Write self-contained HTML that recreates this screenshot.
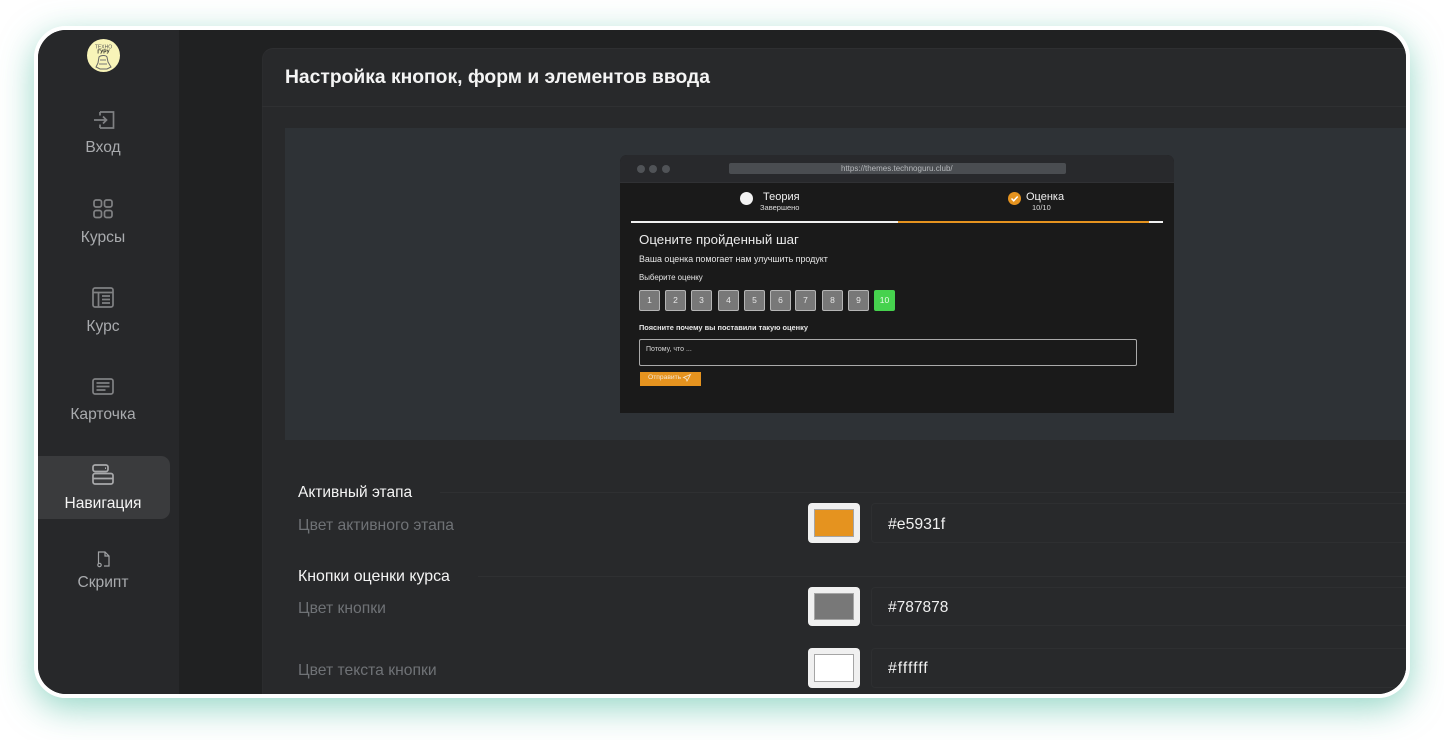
<!DOCTYPE html>
<html lang="ru"><head><meta charset="utf-8"><title>Настройка кнопок</title>
<style>
*{box-sizing:border-box;margin:0;padding:0}
html,body{width:1444px;height:740px;background:#fff;overflow:hidden;font-family:"Liberation Sans","DejaVu Sans",sans-serif}
.a{position:absolute}
.t{position:absolute;white-space:nowrap;line-height:1}
#frame{position:absolute;left:34px;top:26px;width:1376px;height:672px;border:4px solid #fff;border-radius:32px;box-shadow:0 10px 34px rgba(85,190,165,.62)}
#in{position:absolute;left:0;top:0;width:1368px;height:664px;border-radius:28px;overflow:hidden;background:#202122}
#in>*{margin-left:-38px;margin-top:-30px}
.nav{color:#a9abae;font-size:15.6px;text-align:center;width:130px;left:38px}
svg{position:absolute;overflow:visible;fill:none}
.lbl{color:#6f7276;font-size:15.7px}
.h{color:#f4f4f4;font-size:15.800px}
.sw{position:absolute;left:808px;width:52px;background:#f0f0f0;border-radius:4px}
.sw i{position:absolute;left:6px;top:6px;right:6px;bottom:6px;border:1px solid #a5a5a5;display:block}
.inp{position:absolute;left:871px;width:560px;border:1px solid #2e2f31;border-radius:4px;background:#28292b}
.hex{color:#f0f0f0;font-size:15.800px;left:888px}
.ln{position:absolute;height:1px;background:#2f3032}
.n{position:absolute;top:290px;width:21px;height:21px;background:#787878;border:1px solid #b5b5b5;border-radius:2px;color:#e8e8e8;font-size:8.500px;text-align:center;line-height:19px}
</style></head><body>
<div id="frame"><div id="in">
<div class="a" style="left:38px;top:30px;width:141px;height:664px;background:#27282a"></div>
<div class="a" style="left:262px;top:48px;width:1170px;height:680px;background:#28292b;border-radius:11px 0 0 0;border-top:1px solid #2e2f31;border-left:1px solid #2b2c2e"></div>
<div class="ln" style="left:262px;top:106px;width:1150px"></div>

<svg style="left:87px;top:39px" width="33" height="33" viewBox="0 0 33 33"><circle cx="16.5" cy="16.5" r="16.5" fill="#f8f4b8"/><text x="16.500" y="9.500" font-size="5" text-anchor="middle" fill="#555" font-family="Liberation Sans">ТЕХНО</text><text x="16.500" y="14.500" font-size="5" font-weight="bold" text-anchor="middle" fill="#222" font-family="Liberation Sans">ГУРУ</text><path d="M12 18c2-2 7-2 8 0l1 5 3 5-4 2h-7l-4-2 2-4z" stroke="#666" stroke-width="1"/><path d="M13 21h6M12 25h8" stroke="#777" stroke-width="1"/></svg>

<svg style="left:93px;top:111px" width="22" height="18" viewBox="0 0 22 18" stroke="#808183" stroke-width="1.700"><path d="M7 1h13.500v16H7M7 1v3.500M7 13.500V17M1 9h12M10 5.500L13.500 9 10 12.500"/></svg>
<div class="t nav" style="top:140px">Вход</div>

<svg style="left:93px;top:199px" width="20" height="20" viewBox="0 0 20 20" stroke="#808183" stroke-width="1.700"><rect x="1" y="1" width="7.500" height="7" rx="2"/><rect x="11.500" y="1" width="7.500" height="7" rx="2"/><rect x="1" y="11.500" width="7.500" height="7" rx="2"/><rect x="11.500" y="11.500" width="7.500" height="7" rx="2"/></svg>
<div class="t nav" style="top:230px">Курсы</div>

<svg style="left:92px;top:287px" width="22" height="21" viewBox="0 0 22 21" stroke="#808183" stroke-width="1.700"><rect x="1" y="1" width="20" height="19" rx="2"/><path d="M1 5.500h20M6.500 5.500V20M10 9h8M10 12.500h8M10 16h8"/></svg>
<div class="t nav" style="top:319px">Курс</div>

<svg style="left:92px;top:378px" width="22" height="17" viewBox="0 0 22 17" stroke="#808183" stroke-width="1.700"><rect x="1" y="1" width="20" height="15" rx="2"/><path d="M4.500 5h13M4.500 8.500h13M4.500 12h9"/></svg>
<div class="t nav" style="top:407px">Карточка</div>

<div class="a" style="left:38px;top:456px;width:132px;height:63px;background:#3a3b3d;border-radius:0 9px 9px 0"></div>
<svg style="left:92px;top:464px" width="22" height="21" viewBox="0 0 22 21" stroke="#a8a9ab" stroke-width="1.700"><rect x="1" y="1" width="15" height="6.500" rx="2"/><rect x="1" y="9.500" width="20" height="10.500" rx="2"/><path d="M1 14.500h20M13 4.200h1"/></svg>
<div class="t nav" style="top:496px;color:#f4f4f4">Навигация</div>

<svg style="left:96px;top:551px" width="14" height="16" viewBox="0 0 14 16" stroke="#a0a2a4" stroke-width="1.200"><path d="M2.500 13V1h6.500l4 4v10H8"/><path d="M9 1v4h4"/><circle cx="3.500" cy="14" r="1.700"/></svg>
<div class="t nav" style="top:575px">Скрипт</div>

<div class="t" style="left:285px;top:68px;font-size:19.300px;font-weight:bold;color:#f4f4f4">Настройка кнопок, форм и элементов ввода</div>

<div class="a" style="left:285px;top:128px;width:1125px;height:312px;background:#2e3236"></div>
<div class="a" style="left:620px;top:155px;width:554px;height:258px;background:#1a1a1a;border-radius:7px 7px 0 0;overflow:hidden">
<div class="a" style="left:0;top:0;width:554px;height:28px;background:#28292c;border-bottom:1px solid #303134"></div>
<div class="a" style="left:17px;top:10px;width:8px;height:8px;border-radius:50%;background:#505357"></div>
<div class="a" style="left:29px;top:10px;width:8px;height:8px;border-radius:50%;background:#505357"></div>
<div class="a" style="left:42px;top:10px;width:8px;height:8px;border-radius:50%;background:#505357"></div>
<div class="a" style="left:109px;top:8px;width:337px;height:11px;background:#4a4d51;border-radius:2px"></div>
<div class="t" style="left:221px;top:10px;font-size:8px;color:#b5b8bb">https://themes.technoguru.club/</div>

<div class="a" style="left:120px;top:37px;width:13px;height:13px;border-radius:50%;background:#f3f3f3"></div>
<div class="t" style="left:143px;top:37px;font-size:11px;color:#f0f0f0">Теория</div>
<div class="t" style="left:140px;top:49px;font-size:7.500px;color:#dcdcdc">Завершено</div>
<svg style="left:388px;top:37px" width="13" height="13" viewBox="0 0 13 13"><circle cx="6.500" cy="6.500" r="6.500" fill="#e5931f"/><path d="M3.500 6.500l2.200 2.300 4-4.300" stroke="#fff" stroke-width="1.500"/></svg>
<div class="t" style="left:406px;top:37px;font-size:11px;color:#f0f0f0">Оценка</div>
<div class="t" style="left:412px;top:49px;font-size:7.500px;color:#dcdcdc">10/10</div>

<div class="a" style="left:11px;top:66px;width:267px;height:2px;background:#f0f0f0"></div>
<div class="a" style="left:278px;top:66px;width:251px;height:2px;background:#e5931f"></div>
<div class="a" style="left:529px;top:66px;width:14px;height:2px;background:#f0f0f0"></div>

<div class="t" style="left:19px;top:78px;font-size:13.300px;color:#eaeaea">Оцените пройденный шаг</div>
<div class="t" style="left:19px;top:100px;font-size:8.900px;color:#e6e6e6">Ваша оценка помогает нам улучшить продукт</div>
<div class="t" style="left:19px;top:119px;font-size:7.900px;color:#e6e6e6">Выберите оценку</div>
<div class="t" style="left:19px;top:169px;font-size:7.400px;font-weight:bold;color:#e6e6e6">Поясните почему вы поставили такую оценку</div>
<div class="a" style="left:19px;top:184px;width:498px;height:27px;border:1.500px solid #aaa;border-radius:2px"></div>
<div class="t" style="left:26px;top:191px;font-size:7px;color:#d5d5d5">Потому, что ...</div>
<div class="a" style="left:20px;top:217px;width:61px;height:14px;background:#e5931f"></div>
<div class="t" style="left:28px;top:220px;font-size:6.700px;color:#f5e6d0">Отправить</div>
<svg style="left:63px;top:219px" width="8" height="8" viewBox="0 0 8 8" stroke="#f5e6d0" stroke-width=".8"><path d="M7.500.5L.5 3.500l2.500 1 1 2.500z"/></svg>
</div>

<div class="n" style="left:639px">1</div><div class="n" style="left:665px">2</div><div class="n" style="left:691px">3</div><div class="n" style="left:718px">4</div><div class="n" style="left:744px">5</div><div class="n" style="left:770px">6</div><div class="n" style="left:795px">7</div><div class="n" style="left:822px">8</div><div class="n" style="left:848px">9</div><div class="n" style="left:874px;background:#46d24e;border-color:#46d24e;color:#eafbe9">10</div>

<div class="t h" style="left:298px;top:485px;font-size:15.500px">Активный этапа</div>
<div class="ln" style="left:440px;top:492px;width:970px"></div>
<div class="t lbl" style="left:298px;top:518px">Цвет активного этапа</div>
<div class="sw" style="top:503px;height:40px"><i style="background:#e5931f"></i></div>
<div class="inp" style="top:503px;height:40px"></div>
<div class="t hex" style="top:517px">#e5931f</div>

<div class="ln" style="left:478px;top:576px;width:932px"></div>
<div class="t h" style="left:298px;top:569px;font-size:15.900px">Кнопки оценки курса</div>
<div class="t lbl" style="left:298px;top:601px">Цвет кнопки</div>
<div class="sw" style="top:587px;height:39px"><i style="background:#787878"></i></div>
<div class="inp" style="top:587px;height:39px"></div>
<div class="t hex" style="top:600px;font-size:15.500px">#787878</div>

<div class="t lbl" style="left:298px;top:663px">Цвет текста кнопки</div>
<div class="sw" style="top:648px;height:40px"><i style="background:#fff"></i></div>
<div class="inp" style="top:648px;height:40px"></div>
<div class="t hex" style="top:661px;letter-spacing:1px">#ffffff</div>
</div></div>
</body></html>
